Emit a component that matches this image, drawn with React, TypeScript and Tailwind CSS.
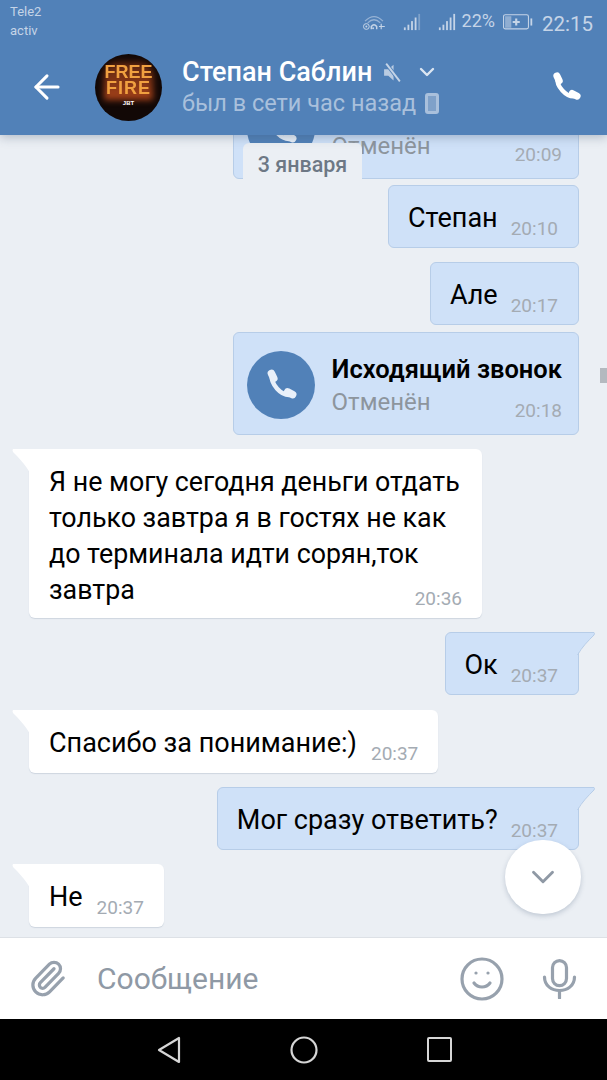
import { ArrowLeft, ChevronDown, Paperclip, Smile } from "lucide-react"

function PhoneGlyph({ className }: { className?: string }) {
  return (
    <svg viewBox="0 0 24 24" fill="none" stroke="currentColor" strokeLinecap="round" className={className}>
      <path d="M6 5.5C5 11 12 19.5 18.5 18.5" strokeWidth="3" />
      <path d="M5.6 4.2L7.2 7.6" strokeWidth="5" />
      <path d="M16.4 16.6L19.8 18.4" strokeWidth="5" />
    </svg>
  )
}

function Tail({ side }: { side: "left" | "right" }) {
  if (side === "left") {
    return (
      <svg viewBox="0 0 18 24" className="absolute top-0 left-[-17px] w-[18px] h-[24px] text-white">
        <path d="M1 0H18V24C13 15 7 9 1 3Q0 1 1 0Z" fill="currentColor" />
      </svg>
    )
  }
  return (
    <svg viewBox="0 0 18 24" className="absolute top-[-1px] right-[-17px] w-[18px] h-[24px]">
      <path d="M17 0.5H0V23C5 15 11 9 17 3Q18 1 17 0.5Z" fill="#cfe1f8" />
      <path d="M0 0.5H17Q18 1 17 3C11 9 5 15 0.5 23" fill="none" stroke="#b7cde8" strokeWidth="1" />
    </svg>
  )
}

function Time({ value }: { value: string }) {
  return <span className="block text-[19px] leading-[22px] text-[#a4abb3] whitespace-nowrap">{value}</span>
}

function Outgoing({ text, time, tail, className }: { text: string; time: string; tail?: boolean; className?: string }) {
  return (
    <div className={`relative self-end flex items-end gap-[13px] mr-[28px] h-[63px] pl-[19px] pr-[20px] pt-[15px] pb-[11px] bg-[#cfe1f8] border border-[#b7cde8] rounded-[6px] ${tail ? "rounded-tr-none" : ""} ${className ?? ""}`}>
      <span className="text-[27px] leading-[36px] text-black whitespace-nowrap">{text}</span>
      <span className="mb-[-4px]"><Time value={time} /></span>
      {tail && <Tail side="right" />}
    </div>
  )
}

function Incoming({ text, time, className }: { text: string; time: string; className?: string }) {
  return (
    <div className={`relative self-start flex items-end gap-[14px] ml-[29px] h-[63px] pl-[20px] pr-[20px] pt-[15px] pb-[12px] bg-white rounded-[6px] rounded-tl-none shadow-[0_1px_1px_rgba(120,140,165,0.25)] ${className ?? ""}`}>
      <span className="text-[27px] leading-[36px] text-black whitespace-nowrap">{text}</span>
      <span className="mb-[-4px]"><Time value={time} /></span>
      <Tail side="left" />
    </div>
  )
}

function CallBubble({ time, className }: { time: string; className?: string }) {
  return (
    <div className={`self-end flex mr-[28px] w-[346px] h-[103px] pl-[13px] pr-[16px] pt-[18px] bg-[#cfe1f8] border border-[#b7cde8] rounded-[6px] ${className ?? ""}`}>
      <div className="w-[68px] h-[68px] rounded-full bg-[#5181b8] flex items-center justify-center text-[#e9f0f9]">
        <PhoneGlyph className="w-[36px] h-[36px]" />
      </div>
      <div className="flex-1 ml-[17px] flex flex-col">
        <span className="text-[25.5px] leading-[36px] font-semibold text-black whitespace-nowrap">Исходящий звонок</span>
        <div className="flex justify-between items-end">
          <span className="text-[24px] leading-[30px] text-[#8d959d]">Отменён</span>
          <span className="mb-[-5px]"><Time value={time} /></span>
        </div>
      </div>
    </div>
  )
}

function StatusIcons() {
  return (
    <div className="flex items-center text-[#c5d4e7] h-[40px]">
      <svg viewBox="0 0 26 20" className="w-[24px] h-[18px]" fill="none" stroke="currentColor">
        <path d="M3 9Q13 -1 23 9" strokeWidth="1.4" opacity="0.6" />
        <path d="M6 11Q13 4 20 11" strokeWidth="1.4" opacity="0.6" />
        <circle cx="4.5" cy="15" r="3.2" strokeWidth="1.1" />
        <circle cx="4.5" cy="15" r="1.1" fill="currentColor" stroke="none" />
        <path d="M10 18V15Q13 11 16 15V18" strokeWidth="1.6" />
        <circle cx="12" cy="17" r="1.1" fill="currentColor" stroke="none" />
        <path d="M21 12V18M18.5 15H25" strokeWidth="1.3" />
      </svg>
      <svg viewBox="0 0 18 20" className="ml-[17px] w-[18px] h-[18px]" fill="currentColor">
        <rect x="0" y="16" width="2" height="3" />
        <rect x="4" y="13" width="2" height="6" />
        <rect x="8" y="9" width="2" height="10" />
        <rect x="12" y="5" width="2" height="14" />
        <rect x="16" y="1" width="2" height="18" opacity="0.4" />
      </svg>
      <svg viewBox="0 0 18 20" className="ml-[17px] w-[18px] h-[18px]" fill="currentColor">
        <rect x="0" y="16" width="2" height="3" />
        <rect x="4" y="13" width="2" height="6" />
        <rect x="8" y="9" width="2" height="10" />
        <rect x="12" y="5" width="2" height="14" />
        <rect x="16" y="1" width="2" height="18" />
      </svg>
      <span className="ml-[6px] text-[18px] leading-[24px] mb-[3px]">22%</span>
      <svg viewBox="0 0 34 18" className="ml-[6px] w-[34px] h-[16px]" fill="none">
        <rect x="0.75" y="0.75" width="28" height="16" rx="2" stroke="currentColor" strokeWidth="1.2" />
        <rect x="2.5" y="2.5" width="7" height="13" fill="currentColor" opacity="0.55" />
        <path d="M15 5V13M11 9H19" stroke="currentColor" strokeWidth="2.4" />
        <rect x="31" y="5" width="2" height="8" fill="currentColor" />
      </svg>
      <span className="ml-[7px] text-[20.5px] leading-[24px] mt-[3px]">22:15</span>
    </div>
  )
}

function Avatar() {
  return (
    <div className="relative w-[67px] h-[67px] rounded-full bg-[#120806] flex flex-col items-center justify-center shrink-0 overflow-hidden">
      <div className="absolute left-[9px] right-[9px] top-[8px] h-[38px] rounded-t-[14px] bg-gradient-to-b from-[#5a2410] to-[#a8431a] blur-[3px]" />
      <div className="relative mt-[-4px] font-['Liberation_Sans',sans-serif] font-bold text-[18px] leading-[16px] text-[#f0a040] blur-[0.6px]">FREE</div>
      <div className="relative font-['Liberation_Sans',sans-serif] font-bold text-[18px] leading-[17px] tracking-[1px] text-[#f0a040] blur-[0.6px]">FIRE</div>
      <div className="relative mt-[3px] font-['Liberation_Sans',sans-serif] font-bold text-[6px] leading-[7px] text-white">JBT</div>
    </div>
  )
}

export default function App() {
  return (
    <div className="relative w-[607px] h-[1080px] overflow-hidden flex flex-col bg-[#ebeff4] font-['Roboto',sans-serif]">
      <header className="relative z-20 h-[135px] shrink-0 bg-[#5181b8] shadow-[0_2px_10px_rgba(60,80,110,0.35)]">
        <div className="flex justify-between pl-[10px] pr-[14px] pt-[2px] h-[44px]">
          <div className="text-[13px] leading-[19px] text-[#c5d4e7]">
            <div>Tele2</div>
            <div>activ</div>
          </div>
          <StatusIcons />
        </div>
        <div className="flex items-center pl-[28px] pr-[24px] mt-[-1px] h-[88px]">
          <ArrowLeft className="w-[38px] h-[38px] text-white shrink-0" strokeWidth={1.9} />
          <div className="ml-[29px]"><Avatar /></div>
          <div className="ml-[20px] flex-1">
            <div className="flex items-center h-[32px]">
              <span className="text-[27px] leading-[32px] font-medium text-white">Степан Саблин</span>
              <svg viewBox="0 0 20 20" className="ml-[10px] w-[21px] h-[21px] text-[#c5d4e7]" fill="currentColor">
                <path d="M2 7H6L11 2.5V17.5L6 13H2Z" opacity="0.9" />
                <path d="M4 1.5L17 18.5" stroke="#5181b8" strokeWidth="3.5" />
                <path d="M4 1.5L17 18.5" stroke="currentColor" strokeWidth="1.8" />
              </svg>
              <ChevronDown className="ml-[12px] w-[24px] h-[24px] text-[#dce6f2]" strokeWidth={2.4} />
            </div>
            <div className="flex items-center h-[30px]">
              <span className="text-[23.5px] leading-[30px] text-[#a9c0dc]">был в сети час назад</span>
              <span className="ml-[9px] w-[14px] h-[21px] rounded-[3px] border-[3px] border-[#a9c0dc] bg-[#7fa1c9]" />
            </div>
          </div>
          <PhoneGlyph className="w-[34px] h-[34px] text-white" />
        </div>
      </header>

      <main className="relative flex-1 min-h-0 overflow-hidden">
        <div className="flex flex-col mt-[-59px]">
          <CallBubble time="20:09" />
          <Outgoing text="Степан" time="20:10" className="mt-[6px]" />
          <Outgoing text="Але" time="20:17" className="mt-[14px]" />
          <CallBubble time="20:18" className="mt-[7px]" />
          <div className="relative self-start ml-[29px] mt-[14px] w-[453px] pl-[20px] pr-[20px] pt-[15px] pb-[8px] bg-white rounded-[6px] rounded-tl-none shadow-[0_1px_1px_rgba(120,140,165,0.25)]">
            <p className="text-[26.8px] leading-[36px] text-black whitespace-nowrap">
              Я не могу сегодня деньги отдать<br />
              только завтра я в гостях не как<br />
              до терминала идти сорян,ток<br />
              завтра
            </p>
            <div className="flex justify-end mt-[-20px]"><Time value="20:36" /></div>
            <Tail side="left" />
          </div>
          <Outgoing text="Ок" time="20:37" tail className="mt-[14px]" />
          <Incoming text="Спасибо за понимание:)" time="20:37" className="mt-[15px]" />
          <Outgoing text="Мог сразу ответить?" time="20:37" tail className="mt-[14px]" />
          <Incoming text="Не" time="20:37" className="mt-[14px]" />
        </div>

        <div className="absolute z-10 left-[243px] top-[8px] w-[119px] h-[44px] rounded-[6px] bg-[#ebeff4] flex items-center justify-center text-[21.5px] font-medium text-[#6d7885]">
          3 января
        </div>
        <div className="absolute right-0 top-[233px] w-[7px] h-[15px] bg-[#b4b9bf]" />
        <div className="absolute z-10 left-[505px] top-[705px] w-[76px] h-[74px] rounded-full bg-white shadow-[0_2px_5px_rgba(90,110,135,0.3)] flex items-center justify-center">
          <ChevronDown className="w-[38px] h-[38px] text-[#8f99a5]" strokeWidth={1.8} />
        </div>
      </main>

      <footer className="h-[82px] shrink-0 bg-white border-t border-[#dde1e6] flex items-center text-[#97a1ad]">
        <Paperclip className="ml-[28px] w-[39px] h-[39px]" strokeWidth={2} />
        <span className="ml-[30px] flex-1 text-[30px] text-[#8f99a5]">Сообщение</span>
        <Smile className="w-[48px] h-[48px]" strokeWidth={1.6} />
        <svg viewBox="0 0 34 40" className="ml-[36px] mr-[30px] w-[35px] h-[40px]" fill="none" stroke="currentColor" strokeWidth="3.2" strokeLinecap="round">
          <rect x="10" y="1.6" width="14" height="25" rx="7" />
          <path d="M2 18C2 36 32 36 32 18" />
          <path d="M17 32V39" />
        </svg>
      </footer>

      <nav className="h-[61px] shrink-0 bg-black flex items-center text-[#d6d6d6]">
        <svg viewBox="0 0 24 28" className="ml-[157px] w-[24px] h-[28px]" fill="none" stroke="currentColor" strokeWidth="2.2" strokeLinejoin="round">
          <path d="M22 2V26L2 14Z" />
        </svg>
        <svg viewBox="0 0 28 28" className="ml-[109px] w-[28px] h-[28px]" fill="none" stroke="currentColor" strokeWidth="2.2">
          <circle cx="14" cy="14" r="12.5" />
        </svg>
        <span className="ml-[109px] w-[25px] h-[25px] rounded-[2px] border-[2.5px] border-current" />
      </nav>
    </div>
  )
}
